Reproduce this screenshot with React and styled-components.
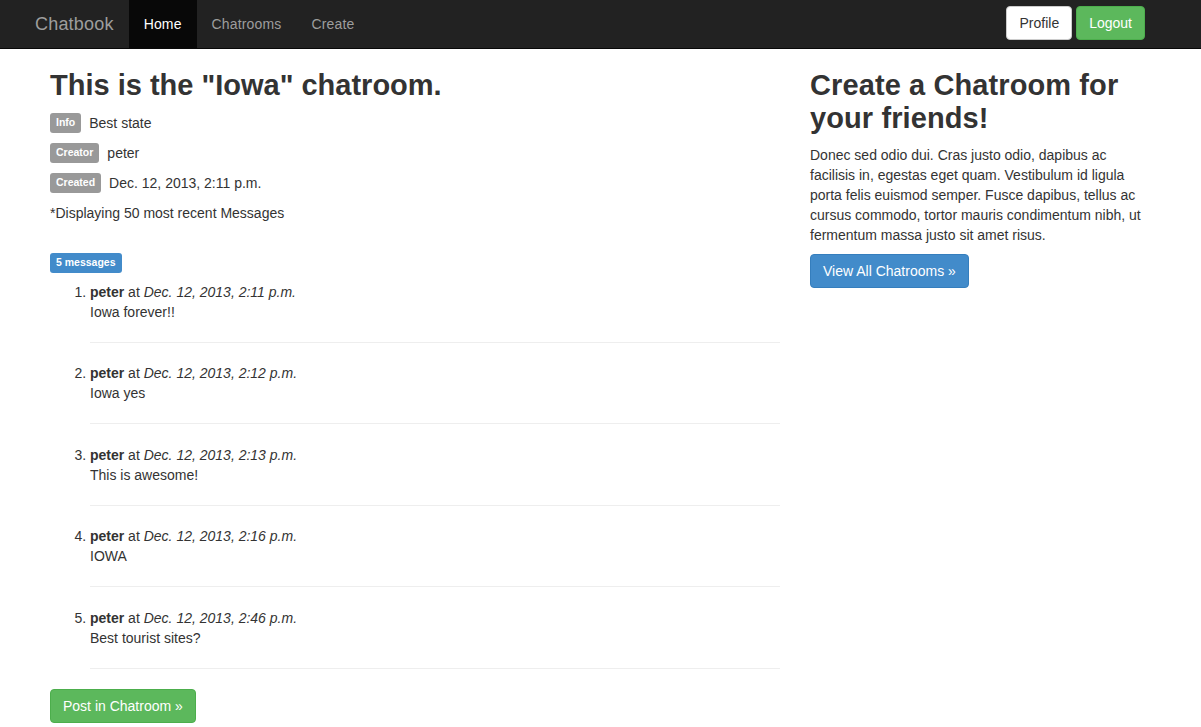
import React from "react";
import styled, { createGlobalStyle } from "styled-components";

const GlobalStyle = createGlobalStyle`
  html, body { margin: 0; padding: 0; overflow: hidden; }
  body {
    font-family: "Liberation Sans", Arial, Helvetica, sans-serif;
    font-size: 14px;
    line-height: 20px;
    color: #333333;
    background: #ffffff;
  }
  * { box-sizing: border-box; }
`;

const Navbar = styled.nav`
  height: 49px;
  background: #222222;
  border-bottom: 1px solid #080808;
  display: flex;
  align-items: stretch;
  padding: 0 56px 0 20px;
`;

const Brand = styled.a`
  display: flex;
  align-items: center;
  padding: 0 15px;
  font-size: 18px;
  color: #9d9d9d;
  text-decoration: none;
  letter-spacing: 0.2px;
`;

const NavList = styled.ul`
  display: flex;
  margin: 0;
  padding: 0;
  list-style: none;
`;

const NavItem = styled.li`
  display: flex;
  align-items: center;
  padding: 0 15px;
  color: ${(p) => (p.$active ? "#ffffff" : "#9d9d9d")};
  background: ${(p) => (p.$active ? "#080808" : "transparent")};
  letter-spacing: 0.15px;
`;

const NavRight = styled.div`
  margin-left: auto;
  display: flex;
  align-items: center;
  gap: 4px;
  padding-bottom: 2px;
`;

const Button = styled.button`
  font-family: inherit;
  font-size: 14px;
  line-height: 20px;
  height: 34px;
  padding: 6px 12px;
  border-radius: 4px;
  border: 1px solid ${(p) => p.$border};
  background: ${(p) => p.$bg};
  color: ${(p) => p.$fg};
  cursor: pointer;
`;

const Main = styled.main`
  display: flex;
  gap: 30px;
  padding: 0 0 0 50px;
`;

const LeftCol = styled.section`
  width: 730px;
`;

const RightCol = styled.aside`
  width: 340px;
`;

const Title = styled.h2`
  margin: 20px 0 ${(p) => p.$gapBelow || "11px"};
  font-size: 29px;
  line-height: 33px;
  font-weight: bold;
  letter-spacing: ${(p) => p.$spacing || "0"};
  color: #333333;
`;

const InfoRow = styled.div`
  display: flex;
  align-items: center;
  gap: 8px;
  height: 20px;
  margin-bottom: 10px;
`;

const Label = styled.span`
  display: inline-flex;
  align-items: center;
  height: 20px;
  padding: 0 6px 1px;
  border-radius: 3px;
  background: ${(p) => p.$bg || "#999999"};
  color: #ffffff;
  font-size: 10.5px;
  font-weight: bold;
  line-height: 1;
`;

const Para = styled.p`
  margin: ${(p) => p.$margin || "0 0 10px"};
`;

const MessageList = styled.ol`
  margin: 9px 0 0;
  padding-left: 40px;
`;

const Message = styled.li``;

const Rule = styled.hr`
  margin: 20px 0 20.5px;
  border: 0;
  border-top: 1px solid #eeeeee;
  height: 0;
`;

const messages = [
  { time: "Dec. 12, 2013, 2:11 p.m.", text: "Iowa forever!!" },
  { time: "Dec. 12, 2013, 2:12 p.m.", text: "Iowa yes" },
  { time: "Dec. 12, 2013, 2:13 p.m.", text: "This is awesome!" },
  { time: "Dec. 12, 2013, 2:16 p.m.", text: "IOWA" },
  { time: "Dec. 12, 2013, 2:46 p.m.", text: "Best tourist sites?" },
];

export default function App() {
  return (
    <>
      <GlobalStyle />
      <Navbar>
        <Brand>Chatbook</Brand>
        <NavList>
          <NavItem $active>Home</NavItem>
          <NavItem>Chatrooms</NavItem>
          <NavItem>Create</NavItem>
        </NavList>
        <NavRight>
          <Button $bg="#ffffff" $border="#cccccc" $fg="#333333">Profile</Button>
          <Button $bg="#5cb85c" $border="#4cae4c" $fg="#ffffff">Logout</Button>
        </NavRight>
      </Navbar>
      <Main>
        <LeftCol>
          <Title>This is the "Iowa" chatroom.</Title>
          <InfoRow>
            <Label>Info</Label>
            <span>Best state</span>
          </InfoRow>
          <InfoRow>
            <Label>Creator</Label>
            <span>peter</span>
          </InfoRow>
          <InfoRow>
            <Label>Created</Label>
            <span>Dec. 12, 2013, 2:11 p.m.</span>
          </InfoRow>
          <Para $margin="0 0 28px">*Displaying 50 most recent Messages</Para>
          <Label $bg="#428bca">5 messages</Label>
          <MessageList>
            {messages.map((m, i) => (
              <Message key={i}>
                <strong>peter</strong> at <em>{m.time}</em>
                <div>{m.text}</div>
                <Rule />
              </Message>
            ))}
          </MessageList>
          <Button $bg="#5cb85c" $border="#4cae4c" $fg="#ffffff">
            Post in Chatroom »
          </Button>
        </LeftCol>
        <RightCol>
          <Title $spacing="0.1px" $gapBelow="10px">Create a Chatroom for your friends!</Title>
          <Para $margin="0 0 9px">
            Donec sed odio dui. Cras justo odio, dapibus ac facilisis in, egestas eget
            quam. Vestibulum id ligula porta felis euismod semper. Fusce dapibus, tellus
            ac cursus commodo, tortor mauris condimentum nibh, ut fermentum massa justo
            sit amet risus.
          </Para>
          <Button $bg="#428bca" $border="#357ebd" $fg="#ffffff">
            View All Chatrooms »
          </Button>
        </RightCol>
      </Main>
    </>
  );
}
